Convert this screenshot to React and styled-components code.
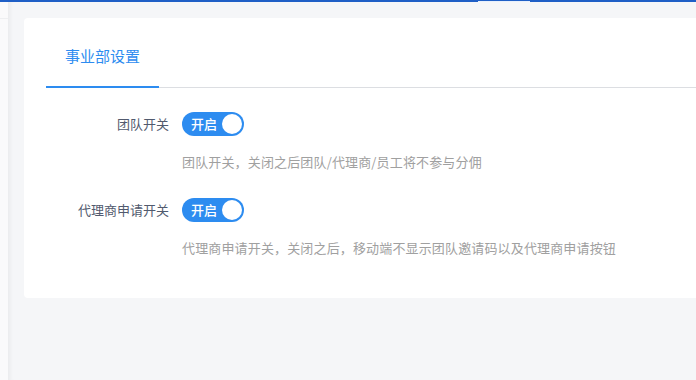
import React from "react";
import styled, {createGlobalStyle} from 'styled-components';

const GlobalStyle = createGlobalStyle`
    html, body { margin: 0; padding: 0; }
    body { font-family: "Noto Sans CJK SC", "Noto Sans", sans-serif; background: #f5f6f8; }
    * { box-sizing: border-box; }
`;

const Page = styled.div`
    display: flex;
    flex-direction: column;
    height: 100vh;
    overflow: hidden;
`;

const TopBar = styled.div`
    display: flex;
    align-items: flex-end;
    height: 2px;
    padding-left: 478px;
    background: #1f5fc6;
    .active { width: 52px; height: 1px; background: #e8f0fc; }
`;

const Body = styled.div`
    display: flex;
    flex: 1;
    min-height: 0;
`;

const Sidebar = styled.div`
    width: 8px;
    flex-shrink: 0;
    background: #fafafb;
    .head { height: 17px; border-bottom: 1px solid #eeeff1; }
`;

const Main = styled.div`
    flex: 1;
    min-width: 0;
    overflow: hidden;
    padding: 16px 0 0 16px;
    background: #f5f6f8;
    box-shadow: inset 5px 0 4px -3px rgba(0,0,0,0.05);
`;

const Card = styled.div`
    width: 720px;
    background: #fff;
    border-radius: 4px;
    padding: 18px 0 40px 22px;
`;

const TabBar = styled.div`
    display: flex;
    height: 52px;
    border-bottom: 1px solid #dcdee2;
`;

const Tab = styled.div`
    position: relative;
    padding: 10px 19px 0;
    font-size: 15px;
    line-height: 20px;
    color: ${p => p.active ? '#2d8cf0' : '#515a6e'};
    cursor: pointer;
    &::after {
        content: '';
        display: ${p => p.active ? 'block' : 'none'};
        position: absolute;
        left: 0;
        right: 0;
        bottom: -1px;
        height: 2px;
        background: #2d8cf0;
    }
`;

const Form = styled.div`
    display: flex;
    flex-direction: column;
    gap: 26px;
    padding-top: 24px;
`;

const FormItem = styled.div`
    display: flex;
    align-items: flex-start;
`;

const Label = styled.div`
    width: 136px;
    flex-shrink: 0;
    padding-right: 13px;
    text-align: right;
    font-size: 13px;
    line-height: 24px;
    color: #515a6e;
`;

const Content = styled.div`
    display: flex;
    flex-direction: column;
    align-items: flex-start;
`;

const Switch = styled.div`
    display: flex;
    align-items: center;
    justify-content: space-between;
    width: 62px;
    height: 24px;
    padding: 0 2px 0 9px;
    border-radius: 12px;
    background: ${p => p.on ? '#2d8cf0' : '#ccc'};
    color: #fff;
    font-size: 13px;
    font-weight: 500;
    cursor: pointer;
    span { line-height: 24px; }
    i { width: 20px; height: 20px; border-radius: 50%; background: #fff; }
`;

const Desc = styled.div`
    margin-top: 16px;
    font-size: 13px;
    line-height: 20px;
    letter-spacing: 0.15px;
    color: #a0a0a0;
    white-space: nowrap;
`;

const settings = [
    {label: '团队开关', desc: '团队开关，关闭之后团队/代理商/员工将不参与分佣'},
    {label: '代理商申请开关', desc: '代理商申请开关，关闭之后，移动端不显示团队邀请码以及代理商申请按钮'},
];

const App = () => {
    return (
        <>
        <GlobalStyle/>
        <Page>
            <TopBar><div className='active'></div></TopBar>
            <Body>
                <Sidebar><div className='head'></div></Sidebar>
                <Main>
                    <Card>
                        <TabBar>
                            <Tab active>事业部设置</Tab>
                        </TabBar>
                        <Form>
                            {settings.map(item => (
                                <FormItem key={item.label}>
                                    <Label>{item.label}</Label>
                                    <Content>
                                        <Switch on>
                                            <span>开启</span>
                                            <i></i>
                                        </Switch>
                                        <Desc>{item.desc}</Desc>
                                    </Content>
                                </FormItem>
                            ))}
                        </Form>
                    </Card>
                </Main>
            </Body>
        </Page>
        </>
    )
}

export default App;
